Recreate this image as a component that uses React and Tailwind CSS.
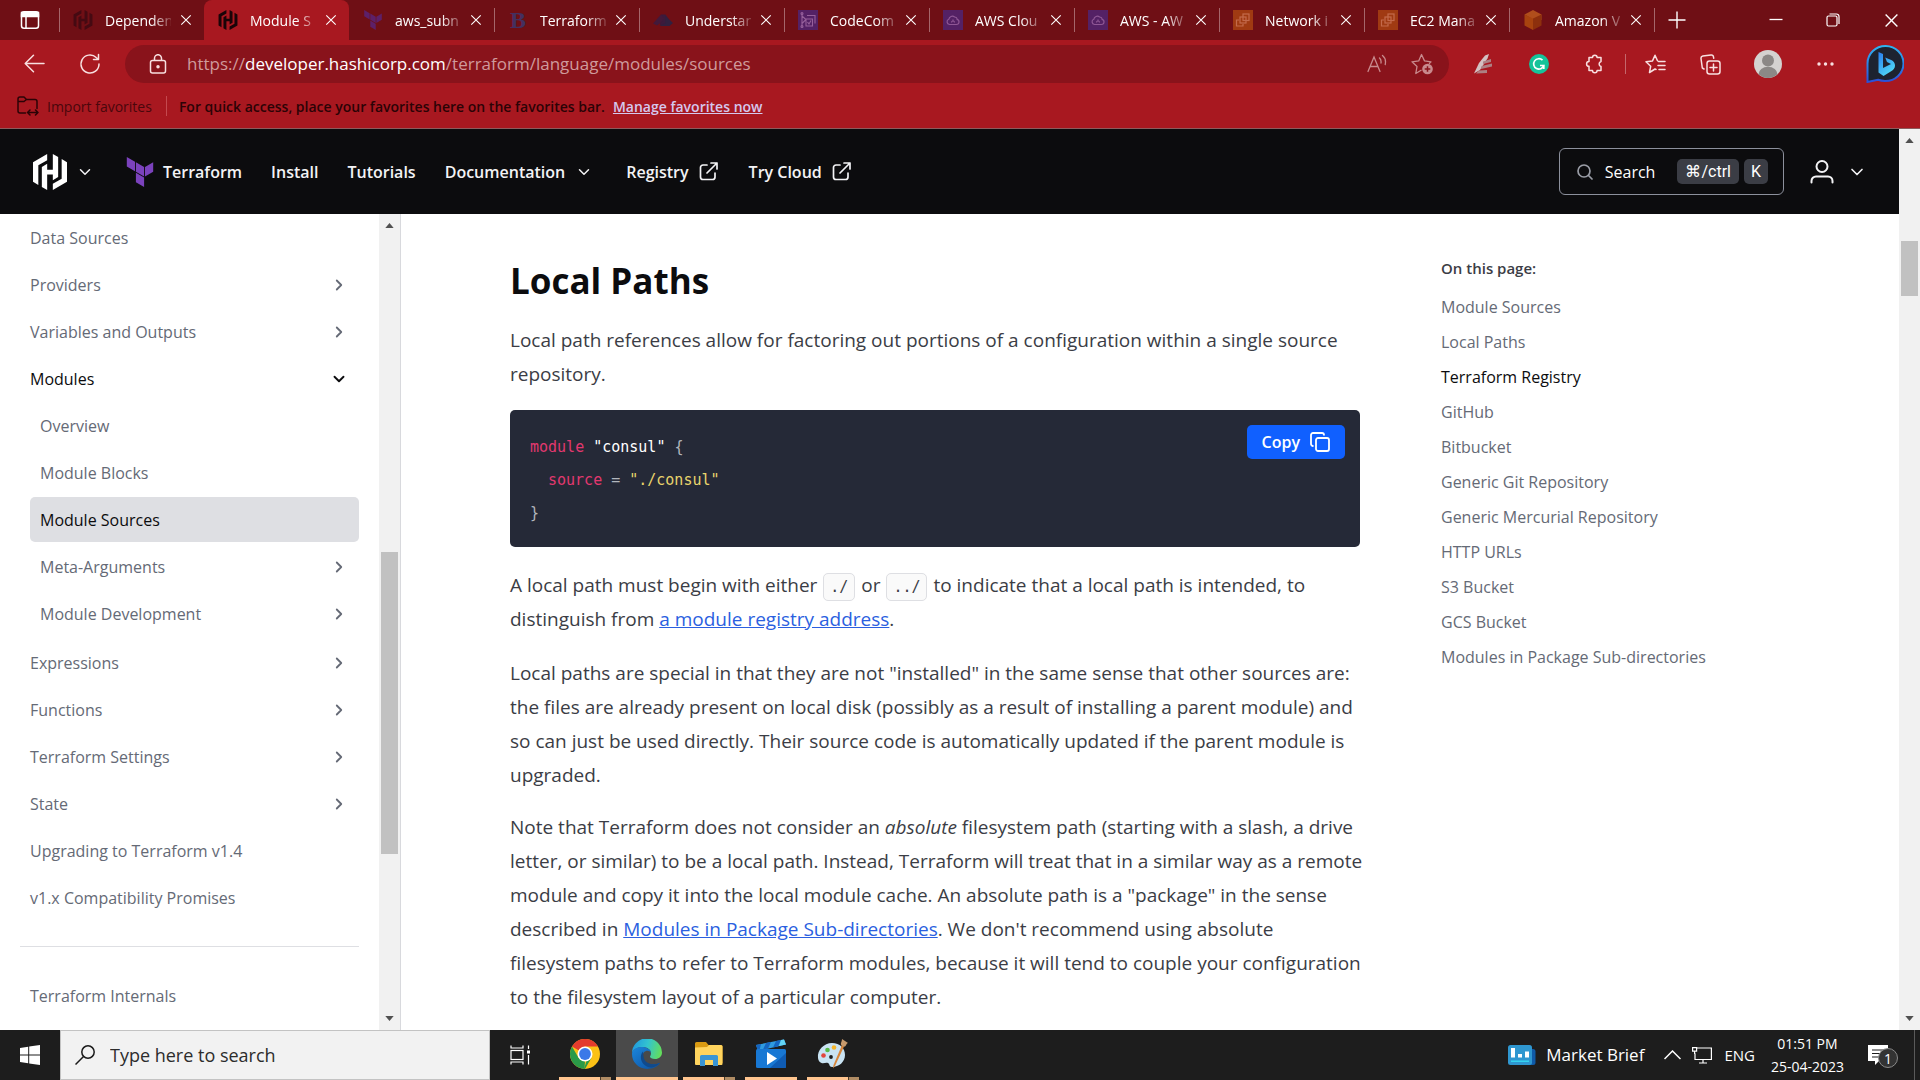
import React from "react";
import { SiHashicorp } from "react-icons/si";
import { ChevronRight, ChevronDown } from "lucide-react";

const TerraformMark = ({ className }) => (
  <svg viewBox="0 0 24 24" className={className} fill="currentColor" aria-hidden="true">
    <path d="M1.44 0v7.575l6.561 3.79V3.787zm21.12 4.227l-6.561 3.791v7.574l6.56-3.787zM8.72 4.23v7.575l6.561 3.787V8.018zm0 8.405v7.575L15.28 24v-7.578z" />
  </svg>
);

const CloudSquare = () => (
  <svg viewBox="0 0 20 20" className="size-5" fill="none" stroke="#8f5795" strokeWidth="1.2">
    <rect width="20" height="20" fill="#542165" stroke="none" />
    <path d="M6.5 14.5h7a2.6 2.6 0 0 0 .6-5.1A2.4 2.4 0 0 0 11.600 7 3.600 3.600 0 0 0 5.800 9.300a2.700 2.700 0 0 0 .7 5.200z" />
    <path d="M8.500 12.500c0-2 3-2 3 0M10 9.500v1.500" />
  </svg>
);

const CommitSquare = () => (
  <svg viewBox="0 0 20 20" className="size-5" fill="none" stroke="#96609b" strokeWidth="1.1">
    <rect width="20" height="20" fill="#542165" stroke="none" />
    <path d="M4 3.500v13M4 6l4 3.500-4 4M9 5.500h8v8M8 9h6.500v7H8z" />
    <path d="M9.500 12l1.500 2 2-3.500" />
    <circle cx="4" cy="3.500" r="1" />
    <circle cx="4" cy="16.500" r="1" />
  </svg>
);

const Ec2Square = () => (
  <svg viewBox="0 0 20 20" className="size-5" fill="none" stroke="#c46a4b" strokeWidth="1.2">
    <rect width="20" height="20" fill="#a03a12" stroke="none" />
    <rect x="10" y="4" width="6" height="6.500" />
    <rect x="7" y="7" width="6" height="6" />
    <path d="M6 10H3.500v6h6.500v-2" />
  </svg>
);

const Cube = () => (
  <svg viewBox="0 0 20 20" className="size-5">
    <path d="M10 0l8.500 4.500V10L10 9.500 1.500 4.500z" fill="#b04e1c" />
    <path d="M1.500 4.500L10 8.500V20l-8.500-4.500z" fill="#a8430f" />
    <path d="M18.500 4.500L10 8.500V20l8.500-4.500z" fill="#8d300d" />
  </svg>
);

const DimCloud = () => (
  <svg viewBox="0 0 20 20" className="size-5">
    <path d="M8 4.500h4.500L16 9.500 12 15H7z" fill="#3b1b3c" />
    <path d="M8 4.500L0 13.500l4 2 4-3 3-4z" fill="#43193a" />
    <path d="M12.500 6l7.500 7-3.500 3H6l6-2.500z" fill="#31203f" />
  </svg>
);

const tabs = [
  { label: "Dependen", icon: <SiHashicorp className="size-5 text-[#450a12]" /> },
  { label: "Module S", icon: <SiHashicorp className="size-5 text-[#1a0408]" />, active: true },
  { label: "aws_subn", icon: <TerraformMark className="size-5 text-[#5d2068]" /> },
  { label: "Terraform", icon: <span className="flex size-5 items-center justify-center font-[Liberation_Serif,serif] text-2xl font-bold text-[#44305f]">B</span> },
  { label: "Understan", icon: <DimCloud /> },
  { label: "CodeCom", icon: <CommitSquare /> },
  { label: "AWS Clou", icon: <CloudSquare /> },
  { label: "AWS - AW", icon: <CloudSquare /> },
  { label: "Network i", icon: <Ec2Square /> },
  { label: "EC2 Mana", icon: <Ec2Square /> },
  { label: "Amazon V", icon: <Cube /> },
];

const CloseX = ({ className }) => (
  <svg viewBox="0 0 14 14" className={className} fill="none" stroke="currentColor" strokeWidth="1.3">
    <path d="M1.500 1.500l11 11M12.500 1.500l-11 11" />
  </svg>
);

function TabStrip() {
  return (
    <div className="flex h-10 items-center bg-[#6f0f15] text-white">
      <button aria-label="Tab actions" className="flex h-full w-[59px] shrink-0 items-center justify-center">
        <svg viewBox="0 0 20 20" className="size-5" fill="none" stroke="currentColor" strokeWidth="1.500">
          <rect x="1.500" y="1.700" width="17" height="16.600" rx="2.500" />
          <path d="M1.500 2.500h17v4h-17z" fill="currentColor" />
          <path d="M6 6v12" />
        </svg>
      </button>
      {tabs.map((t, i) => (
        <div
          key={i}
          className={
            t.active
              ? "flex h-full max-w-[145px] flex-1 items-center rounded-t-lg bg-[#a81820] pl-[14px] pr-[11px]"
              : "relative flex h-full max-w-[145px] flex-1 items-center pl-[14px] pr-[11px]"
          }
        >
          {!t.active && i !== 2 && <span className="absolute left-0 top-2 h-6 w-px bg-[#a5666a]" />}
          <span className="shrink-0">{t.icon}</span>
          <span className="ml-3 min-w-0 flex-1 whitespace-nowrap text-[14px] [mask-image:linear-gradient(to_right,black_70%,rgba(0,0,0,0.2))]">
            {t.label}
          </span>
          <button aria-label={"Close " + t.label} className="ml-2 shrink-0 p-px">
            <CloseX className="size-3" />
          </button>
        </div>
      ))}
      <div className="flex h-full items-center">
        <span className="h-6 w-px bg-[#a5666a]" />
        <button aria-label="New tab" className="flex h-full w-11 items-center justify-center">
          <svg viewBox="0 0 18 18" className="size-[18px]" stroke="currentColor" strokeWidth="1.400">
            <path d="M9 0.500v17M0.500 9h17" />
          </svg>
        </button>
      </div>
      <div className="ml-auto flex h-full">
        <button aria-label="Minimize" className="flex w-[57px] items-center justify-center">
          <svg viewBox="0 0 14 14" className="size-[14px]" stroke="currentColor" strokeWidth="1.300"><path d="M0.500 6.500h13" /></svg>
        </button>
        <button aria-label="Restore" className="flex w-[58px] items-center justify-center">
          <svg viewBox="0 0 14 14" className="size-[14px]" fill="none" stroke="currentColor" strokeWidth="1.200">
            <rect x="1" y="3" width="10" height="10" rx="1.500" />
            <path d="M3.500 1h7A2.500 2.500 0 0 1 13 3.500V11" />
          </svg>
        </button>
        <button aria-label="Close window" className="flex w-[58px] items-center justify-center">
          <CloseX className="size-[15px]" />
        </button>
      </div>
    </div>
  );
}

function AddressRow() {
  return (
    <div className="flex h-12 items-center text-[#f8dfe0]">
      <button aria-label="Back" className="ml-6 shrink-0">
        <svg viewBox="0 0 21 20" className="h-5 w-[21px]" fill="none" stroke="currentColor" strokeWidth="1.500" strokeLinecap="round" strokeLinejoin="round">
          <path d="M20 9.500H1.500M9.500 1.200l-8.300 8.300 8.300 8.300" />
        </svg>
      </button>
      <button aria-label="Refresh" className="ml-[34px] shrink-0">
        <svg viewBox="0 0 22 22" className="size-[22px]" fill="none" stroke="currentColor" strokeWidth="1.500" strokeLinecap="round" strokeLinejoin="round">
          <path d="M20 11a9 9 0 1 1-2.800-6.500L19.500 6.500M19.500 1.500v5h-5" />
        </svg>
      </button>
      <div className="ml-6 flex h-[38px] min-w-0 flex-1 items-center rounded-full bg-[#89131b] pl-6 pr-4">
        <svg viewBox="0 0 18 20" className="h-5 w-[18px] shrink-0" fill="none" stroke="currentColor" strokeWidth="1.500">
          <rect x="1.500" y="6.500" width="15" height="12.500" rx="2" />
          <path d="M5.500 6.500V4.200a3.500 3.500 0 0 1 7 0v2.300" />
          <circle cx="9" cy="12.700" r="1" fill="currentColor" />
        </svg>
        <p aria-label="Address" className="ml-5 flex-1 truncate text-[17px] text-[#cf9a9c]">
          https://<span className="text-white">developer.hashicorp.com</span>/terraform/language/modules/sources
        </p>
        <button aria-label="Read aloud" className="shrink-0 text-[#c88a8d]">
          <svg viewBox="0 0 20 20" className="size-5" fill="none" stroke="currentColor" strokeWidth="1.300" strokeLinecap="round">
            <path d="M1 17.500L7 3l6 14.500M3 12.500h8M12.500 4c1.500 1.300 1.800 3 1.500 5M15.500 1.500c3 2.500 3.500 5.500 2.700 9" />
          </svg>
        </button>
        <button aria-label="Add to favorites" className="ml-6 shrink-0 text-[#c88a8d]">
          <svg viewBox="0 0 22 22" className="size-[22px]" fill="none" stroke="currentColor" strokeWidth="1.300" strokeLinejoin="round">
            <path d="M10.500 17l-5.700 3.500L6 13.500 1 8.800l6.700-.9L10.500 1.500l3 6.400 6.500.9-2 2" />
            <circle cx="16.500" cy="16" r="5.300" fill="#c88a8d" stroke="none" />
            <path d="M16.500 13.200v5.600M13.700 16h5.600" stroke="#89131b" strokeWidth="1.500" />
          </svg>
        </button>
      </div>
      <div className="ml-[25px] flex shrink-0 items-center">
        <button aria-label="Editor extension">
          <svg viewBox="0 0 20 20" className="size-5">
            <path d="M0 19.500L5 9 11 1.500 15 0l-1.500 4.500L6 16z" fill="#d3c1c2" />
            <path d="M9 7.500l8-2.500v3l-8 2M7.500 12l10.500-2.500v3l-11 2.500M5 16.500l8-.5v3l-11 .5z" fill="#ad8083" />
          </svg>
        </button>
        <button aria-label="Grammarly" className="ml-[35px]">
          <svg viewBox="0 0 20 20" className="size-5" fill="none" stroke="#fff" strokeWidth="1.700">
            <circle cx="10" cy="10" r="10" fill="#15c39a" stroke="none" />
            <path d="M13.500 6.200A5.200 5.200 0 1 0 14.800 11.500H11M14.800 11v4" />
          </svg>
        </button>
        <button aria-label="Extensions" className="ml-[36px]">
          <svg viewBox="0 0 20 20" className="size-5" fill="none" stroke="currentColor" strokeWidth="1.500" strokeLinejoin="round">
            <path d="M4 3.500h3.500a2.300 2.300 0 0 1 4.600 0H16v4a2.600 2.600 0 0 0 0 5v4h-3.900a2.300 2.300 0 0 1-4.600 0H4v-4.200a2.400 2.400 0 0 1 0-4.800z" />
          </svg>
        </button>
        <span className="ml-5 h-5 w-px bg-[#c4676c]" />
        <button aria-label="Favorites" className="ml-[19px]">
          <svg viewBox="0 0 21 20" className="h-5 w-[21px]" fill="none" stroke="currentColor" strokeWidth="1.500" strokeLinejoin="round" strokeLinecap="round">
            <path d="M11 15.500L10 15l-5.500 3.500 1.200-6.300L1 7.800l6.500-.9L10 1.200l2.500 5.500M13.500 7.500H20M13 11.500h7M14 15.500h6" />
          </svg>
        </button>
        <button aria-label="Collections" className="ml-[34px]">
          <svg viewBox="0 0 21 21" className="size-[21px]" fill="none" stroke="currentColor" strokeWidth="1.500" strokeLinejoin="round" strokeLinecap="round">
            <rect x="7" y="7" width="13" height="13" rx="2.500" />
            <path d="M13.500 10v7M10 13.500h7M4 15l-1.700-1L1 4.500A2.300 2.300 0 0 1 2.800 2L11 1a2.300 2.300 0 0 1 2.500 2l.2 1.200" />
          </svg>
        </button>
        <button aria-label="Profile" className="ml-[33px]">
          <svg viewBox="0 0 28 28" className="size-7">
            <circle cx="14" cy="14" r="14" fill="#d4d2d0" />
            <circle cx="14" cy="10.500" r="6" fill="#8b8886" />
            <path d="M4.500 24.300a9.500 7.500 0 0 1 19 0A14 14 0 0 1 14 28a14 14 0 0 1-9.500-3.700z" fill="#8b8886" />
          </svg>
        </button>
        <button aria-label="Settings and more" className="ml-[35px]">
          <svg viewBox="0 0 17 4" className="h-1 w-[17px]" fill="currentColor">
            <circle cx="2" cy="2" r="1.700" /><circle cx="8.500" cy="2" r="1.700" /><circle cx="15" cy="2" r="1.700" />
          </svg>
        </button>
        <button aria-label="Bing" className="ml-8 mr-4">
          <svg viewBox="0 0 38 38" className="size-[38px]">
            <defs>
              <linearGradient id="bingRing" x1="0" y1="0" x2="0" y2="1">
                <stop offset="0" stopColor="#2fb4f0" /><stop offset="1" stopColor="#2b4fd8" />
              </linearGradient>
              <linearGradient id="bingB" x1="0" y1="0" x2="0.600" y2="1">
                <stop offset="0" stopColor="#2a7df0" /><stop offset="1" stopColor="#4fd8f5" />
              </linearGradient>
            </defs>
            <path d="M1.500 37V18.500A18 17.500 0 1 1 19 36c-3 0-5-.5-7-1.200z" fill="#1d2330" stroke="url(#bingRing)" strokeWidth="2" />
            <path d="M12.500 7l4.500 2v14l8-4-4-2-1.800-4.500 6 2.400c2.800 1.200 3.800 3.300 3.800 5.600s-1.200 4.200-3.500 5.500L17.500 31l-5-3.500z" fill="url(#bingB)" />
          </svg>
        </button>
      </div>
    </div>
  );
}

function FavoritesBar() {
  return (
    <div className="flex h-[41px] items-center border-b border-[#8d5a5c] pb-1 pl-[17px] text-[14px] text-[#2b0306]">
      <button className="flex items-center text-[#4a070c]">
        <svg viewBox="0 0 22 20" className="h-5 w-[22px]" fill="none" stroke="#2b0306" strokeWidth="1.500" strokeLinejoin="round" strokeLinecap="round">
          <path d="M8.500 17H3a2 2 0 0 1-2-2V3a2 2 0 0 1 2-2h4l2.500 2.500H18a2 2 0 0 1 2 2v7M1 5.500h6L9.500 3.500" />
          <path d="M10.500 16.500H21M13 14l-2.500 2.500L13 19M18.500 14l2.500 2.500-2.500 2.500" />
        </svg>
        <span className="ml-2">Import favorites</span>
      </button>
      <span className="ml-[14px] h-5 w-px bg-[#c4494f]" />
      <span className="ml-3 font-semibold">For quick access, place your favorites here on the favorites bar.</span>
      <a href="#favorites" className="ml-2 font-semibold text-[#d5c8ee] underline">Manage favorites now</a>
    </div>
  );
}

const External = () => (
  <svg viewBox="0 0 19 19" className="size-[19px]" fill="none" stroke="currentColor" strokeWidth="1.700" strokeLinecap="round" strokeLinejoin="round">
    <path d="M8 3H4A2.500 2.500 0 0 0 1.500 5.500V15A2.500 2.500 0 0 0 4 17.500h9.500A2.500 2.500 0 0 0 16 15v-4M12 1h6v6M18 1L8 11" />
  </svg>
);

function SiteHeader() {
  return (
    <header className="flex h-[85px] shrink-0 items-center bg-[#0c0c0e] pl-8 text-[16px] font-semibold text-[#f3f3f5]">
      <button aria-label="HashiCorp products" className="flex items-center">
        <SiHashicorp className="size-9 text-white" />
        <ChevronDown className="ml-2 size-[18px]" strokeWidth={2} />
      </button>
      <nav className="flex items-center whitespace-nowrap">
        <a href="#terraform" className="ml-[31px] flex items-center gap-2">
          <TerraformMark className="size-[30px] text-[#7b42bc]" />
          Terraform
        </a>
        <a href="#install" className="ml-[29px]">Install</a>
        <a href="#tutorials" className="ml-[29px]">Tutorials</a>
        <button className="ml-[29px] flex items-center gap-[10px] font-semibold">
          Documentation
          <ChevronDown className="size-[18px]" strokeWidth={2} />
        </button>
        <a href="#registry" className="ml-[33px] flex items-center gap-[10px]">Registry <External /></a>
        <a href="#cloud" className="ml-[31px] flex items-center gap-[10px]">Try Cloud <External /></a>
      </nav>
      <button className="ml-auto flex h-[47px] items-center rounded-md border border-[#8c909c] pl-[17px] pr-[15px] font-normal text-white">
        <svg viewBox="0 0 16 16" className="size-4" fill="none" stroke="#9a9da6" strokeWidth="1.700" strokeLinecap="round">
          <circle cx="7" cy="7" r="6" /><path d="M11.500 11.500L15 15" />
        </svg>
        <span className="ml-3 text-[16px]">Search</span>
        <kbd className="ml-[22px] flex h-[25px] items-center rounded-[5px] bg-[#3b3d45] px-2 font-[Roboto,sans-serif] text-[16px]">⌘/ctrl</kbd>
        <kbd className="ml-[5px] flex h-[25px] items-center rounded-[5px] bg-[#3b3d45] px-[7px] font-[Roboto,sans-serif] text-[16px]">K</kbd>
      </button>
      <button aria-label="Account" className="ml-[26px] mr-8 flex items-center">
        <svg viewBox="0 0 24 24" className="size-6" fill="none" stroke="currentColor" strokeWidth="2" strokeLinecap="round">
          <circle cx="12" cy="6.500" r="5.500" />
          <path d="M1.500 22.500V21a4.500 4.500 0 0 1 4.500-4.500h12A4.500 4.500 0 0 1 22.500 21v1.500" />
        </svg>
        <ChevronDown className="ml-[13px] size-5" strokeWidth={2} />
      </button>
    </header>
  );
}

const itemsTop = [["Data Sources"], ["Providers", 1], ["Variables and Outputs", 1]];
const itemsNested = [["Overview"], ["Module Blocks"], ["Module Sources", 0, 1], ["Meta-Arguments", 1], ["Module Development", 1]];
const itemsBottom = [["Expressions", 1], ["Functions", 1], ["Terraform Settings", 1], ["State", 1], ["Upgrading to Terraform v1.4"], ["v1.x Compatibility Promises"]];

function Item({ label, more, selected, nested }) {
  return (
    <a
      href="#item"
      className={
        (selected ? "bg-[#dedfe3] text-[#0c0c0e] " : "text-[#656a76] ") +
        (nested ? "pl-[10px] " : "") +
        "flex h-[45px] items-center justify-between rounded-[5px] pr-[11px]"
      }
    >
      {label}
      {more ? <ChevronRight className="size-[18px]" strokeWidth={2.4} /> : null}
    </a>
  );
}

function ScrollArrow({ down }) {
  return (
    <svg viewBox="0 0 10 6" className="mx-auto h-[5px] w-[9px] shrink-0" fill="#505050">
      <path d={down ? "M0 0h10L5 6z" : "M0 6h10L5 0z"} />
    </svg>
  );
}

function Sidebar() {
  return (
    <aside className="flex w-[401px] shrink-0 border-r border-[#d8d9dd] text-[16px]">
      <div className="flex-1 overflow-hidden pl-[30px] pr-5 pt-px">
        <nav className="flex flex-col gap-[2px]">
          {itemsTop.map(([l, m]) => <Item key={l} label={l} more={m} />)}
          <button className="flex h-[45px] items-center justify-between pr-[11px] text-[#0c0c0e]">
            Modules
            <ChevronDown className="size-[18px]" strokeWidth={2.5} />
          </button>
          {itemsNested.map(([l, m, s]) => <Item key={l} label={l} more={m} selected={s} nested />)}
          <div />
          {itemsBottom.map(([l, m]) => <Item key={l} label={l} more={m} />)}
        </nav>
        <hr className="-ml-[10px] mb-[26px] mt-[26px] border-[#dedfe3]" />
        <Item label="Terraform Internals" />
      </div>
      <div className="flex w-[21px] shrink-0 flex-col bg-[#f1f1f1] pb-[9px] pt-[9px]">
        <ScrollArrow />
        <div className="flex-[324]" />
        <div className="mx-[2px] flex-[302] bg-[#c1c1c1]" />
        <div className="flex-[162]" />
        <ScrollArrow down />
      </div>
    </aside>
  );
}

const Kbd = ({ children }) => (
  <code className="mx-px rounded-[5px] border border-[#dedfe3] bg-[#fafafa] px-[6px] py-1 font-['DejaVu_Sans_Mono',monospace] text-[15px] leading-5">{children}</code>
);

const toc = ["Module Sources", "Local Paths", "Terraform Registry", "GitHub", "Bitbucket", "Generic Git Repository", "Generic Mercurial Repository", "HTTP URLs", "S3 Bucket", "GCS Bucket", "Modules in Package Sub-directories"];

function Article() {
  return (
    <article className="max-w-[850px] flex-1 pt-[45px] text-[19px] leading-[34px] text-[#3b3d45]">
      <h1 className="text-[35px] font-bold leading-[44px] text-[#0c0c0e]">Local Paths</h1>
      <p className="mt-5">
        Local path references allow for factoring out portions of a configuration within a single source repository.
      </p>
      <div className="relative mt-[19px] rounded-[5px] bg-[#252937] px-5 pb-[17px] pt-[21px]">
        <code className="flex flex-col whitespace-pre font-['DejaVu_Sans_Mono',monospace] text-[15px] leading-[33px] text-[#b2b6bd]">
          <span className="flex gap-[9px]">
            <span className="text-[#e2386f]">module</span>
            <span className="text-white">"consul"</span>
            <span>{"{"}</span>
          </span>
          <span className="flex gap-[9px] pl-[18px]">
            <span className="text-[#e2386f]">source</span>
            <span>=</span>
            <span className="text-[#e8d46c]">"./consul"</span>
          </span>
          <span>{"}"}</span>
        </code>
        <button className="absolute right-[15px] top-[15px] flex h-[34px] items-center gap-[10px] rounded-[5px] bg-[#1060ff] px-[15px] text-[16px] font-semibold text-white">
          Copy
          <svg viewBox="0 0 20 20" className="size-5" fill="none" stroke="currentColor" strokeWidth="1.800" strokeLinejoin="round">
            <rect x="6" y="6" width="13" height="13" rx="2" />
            <path d="M3.500 14H3a2 2 0 0 1-2-2V3a2 2 0 0 1 2-2h9a2 2 0 0 1 2 2v.5" />
          </svg>
        </button>
      </div>
      <p className="mt-[21px]">
        A local path must begin with either <Kbd>./</Kbd> or <Kbd>../</Kbd> to indicate that a local path is intended, to
        distinguish from <a href="#registry" className="text-[#2b5fe0] underline">a module registry address</a>.
      </p>
      <p className="mt-5">
        Local paths are special in that they are not "installed" in the same sense that other sources are: the files are
        already present on local disk (possibly as a result of installing a parent module) and so can just be used
        directly. Their source code is automatically updated if the parent module is upgraded.
      </p>
      <p className="-mr-5 mt-[18px]">
        Note that Terraform does not consider an <em>absolute</em> filesystem path (starting with a slash, a drive
        <br />
        letter, or similar) to be a local path. Instead, Terraform will treat that in a similar way as a remote
        <br />
        module and copy it into the local module cache. An absolute path is a "package" in the sense
        <br />
        described in <a href="#subdirs" className="text-[#2b5fe0] underline">Modules in Package Sub-directories</a>. We
        don't recommend using absolute
        <br />
        filesystem paths to refer to Terraform modules, because it will tend to couple your configuration
        <br />
        to the filesystem layout of a particular computer.
      </p>
    </article>
  );
}

function Toc() {
  return (
    <nav className="ml-[81px] mr-[58px] w-[400px] shrink-0 pt-[42px] text-[16px] text-[#656a76]">
      <p className="text-[15px] font-semibold leading-6 text-[#3b3d45]">On this page:</p>
      <ul className="mt-[9px]">
        {toc.map((t) => (
          <li key={t} className="flex h-[35px] items-center">
            <a href="#section" className={t === "Terraform Registry" ? "text-[#0c0c0e]" : ""}>{t}</a>
          </li>
        ))}
      </ul>
    </nav>
  );
}

const Chrome = () => (
  <svg viewBox="0 0 30 30" className="size-[30px]">
    <circle cx="15" cy="15" r="15" fill="#fbc116" />
    <path d="M2 7.500A15 15 0 0 1 28 7.500H15L8.500 11.200z" fill="#e33b2e" />
    <path d="M2 7.500L8.500 18.700 15 22.500l-.5 7.500A15 15 0 0 1 2 7.500z" fill="#2a9a48" />
    <path d="M21.500 18.700L15 30h-1l2.500-8z" fill="#2a9a48" />
    <circle cx="15" cy="15" r="7.500" fill="#fff" />
    <circle cx="15" cy="15" r="5.900" fill="#3b79e8" />
  </svg>
);

const Edge = () => (
  <svg viewBox="0 0 30 30" className="size-[30px]">
    <defs>
      <linearGradient id="edgeTop" x1="0" y1="0.300" x2="1" y2="0.500">
        <stop offset="0" stopColor="#1f97e0" /><stop offset="0.500" stopColor="#33c4cf" /><stop offset="1" stopColor="#63dd5c" />
      </linearGradient>
      <linearGradient id="edgeLow" x1="0" y1="0" x2="1" y2="1">
        <stop offset="0" stopColor="#1b86dc" /><stop offset="1" stopColor="#0c4f9e" />
      </linearGradient>
    </defs>
    <path d="M0 15A15 15 0 0 1 30 13.500c0 4-3 6.500-7 6.500-3 0-5-1-5-2.200 0-1 1-1.300 1-3.800 0-3-3.500-6-8.500-6C5 8 0 11 0 15z" fill="url(#edgeTop)" />
    <path d="M0 15c0-4 4-7 9.500-7 5 0 9.500 2.500 9.500 6-1-2-3-2.500-5-2-3 1-4 4-3 7.500 1.500 5 7 7 13 5.500 2-.5 3.500-1 4-.7C25 28 20 30 15 30A15 15 0 0 1 0 15z" fill="url(#edgeLow)" />
    <path d="M11 12.500c-3 3-3 9 1 13 2.500 2.500 6 3.500 9 2.800 3-1 5.500-2.500 7-4.500-6 3-13 1.500-15.500-3-1.500-3-1-6-1.500-8.300z" fill="#114a8b" />
  </svg>
);

const Folder = () => (
  <svg viewBox="0 0 30 26" className="h-[26px] w-[30px]">
    <path d="M1 2.500A1.500 1.500 0 0 1 2.500 1H12l2.500 3H27a1.500 1.500 0 0 1 1.500 1.500V22H1z" fill="#d99a12" />
    <path d="M1 6.500L13 6l2-2h12a1.500 1.500 0 0 1 1.500 1.500V23a1 1 0 0 1-1 1H2a1 1 0 0 1-1-1z" fill="#ffd45e" />
    <path d="M6 25v-9.500A1.500 1.500 0 0 1 7.500 14h15a1.500 1.500 0 0 1 1.500 1.500V25h-5v-6h-8v6z" fill="#3a95d4" />
  </svg>
);

const Movies = () => (
  <svg viewBox="0 0 30 30" className="size-[30px]">
    <path d="M0 6l28-5.500 2 5L2 12z" fill="#2f9be0" />
    <path d="M0 6l5-1-1.500 6.500L2 12zM10 4l5-1-3 6.500-5 1zM20 2l5-1-3 6.500-5 1z" fill="#1565c0" />
    <path d="M25 1l3-.5 2 5-7 1.500z" fill="#62d4f5" />
    <rect y="10" width="30" height="19" rx="1.500" fill="#1878d4" />
    <path d="M14 29L30 14v13.500a1.500 1.500 0 0 1-1.500 1.500z" fill="#0f5cb4" />
    <path d="M11 13l10 6.500L11 26z" fill="#fff" />
  </svg>
);

const Paint = () => (
  <svg viewBox="0 0 32 30" className="h-[30px] w-8">
    <path d="M1 19C0 11 7 4 15 4s13 5 13 12-6 12-13 12c-3 0-2-3-4-4-2.500-1-4 1-6.500 0C2.500 23.300 1.300 21.500 1 19z" fill="#c9e3f3" />
    <circle cx="6.500" cy="16.500" r="2.300" fill="#e2453c" />
    <circle cx="10.500" cy="11" r="2.300" fill="#58b947" />
    <circle cx="17" cy="8.500" r="2.300" fill="#f5b52c" />
    <circle cx="14" cy="18" r="1.900" fill="#1e1e1e" />
    <path d="M25 6l2 1.500L18 27l-2 2.500.5-3.500z" fill="#d8863b" />
    <path d="M24.500 6.500C23 4 25 3 25 0l6 4c-2 .5-1.500 3.500-4 3.800z" fill="#c79a6c" />
  </svg>
);

const apps = [
  { name: "Chrome", icon: <Chrome />, split: true },
  { name: "Edge", icon: <Edge />, active: true },
  { name: "File Explorer", icon: <Folder />, split: true },
  { name: "Movies", icon: <Movies /> },
  { name: "Paint", icon: <Paint />, split: true },
];

function Taskbar() {
  return (
    <footer className="flex h-[50px] shrink-0 items-center bg-[#1d1d1d] text-white">
      <button aria-label="Start" className="flex h-full w-[60px] items-center justify-center">
        <svg viewBox="0 0 20 20" className="size-5" fill="#fff">
          <path d="M0 2.900L8.200 1.700v7.800H0zM9.200 1.600L20 0v9.500H9.200zM0 10.500h8.200v7.800L0 17.100zM9.200 10.500H20V20L9.200 18.400z" />
        </svg>
      </button>
      <label className="flex h-full w-[430px] items-center border border-[#c3c3c3] bg-[#f2f2f2] pl-[14px] text-[#1a1a1a]">
        <svg viewBox="0 0 20 20" className="size-5 shrink-0" fill="none" stroke="currentColor" strokeWidth="1.500">
          <circle cx="13" cy="7" r="6.200" /><path d="M8.500 11.500L0.500 19.500" />
        </svg>
        <input aria-label="Search" placeholder="Type here to search" className="ml-[15px] w-full bg-transparent text-[18px] outline-none placeholder:text-[#2c2c2c]" />
      </label>
      <button aria-label="Task view" className="flex h-full w-[59px] items-center justify-center">
        <svg viewBox="0 0 20 20" className="size-5" fill="none" stroke="#fff" strokeWidth="1.200">
          <rect x="1" y="5.500" width="12" height="9" />
          <path d="M1 0.500V3h12V0.500M1 19.500V17h12v2.500M18.500 0.500V4M18.500 10v9.500" />
          <rect x="17" y="5.500" width="3" height="3" fill="#fff" stroke="none" />
        </svg>
      </button>
      <div className="ml-[5px] flex h-full">
        {apps.map((a) => (
          <button key={a.name} aria-label={a.name} className={a.active ? "flex h-full w-[62px] flex-col bg-[#4a4a4a]" : "flex h-full w-[62px] flex-col px-[5px]"}>
            <span className="flex flex-1 items-center justify-center pt-px">{a.icon}</span>
            <span className="flex h-[3px] w-full bg-[#ffc58f]">
              {a.split && <span className="ml-auto w-[11px] border-l border-[#4a3a2a] bg-[#b08c64]" />}
            </span>
          </button>
        ))}
      </div>
      <div className="ml-auto flex h-full items-center">
        <button className="flex items-center text-[17px]">
          <svg viewBox="0 0 28 20" className="h-5 w-7">
            <path d="M20 4h5a2.500 2.500 0 0 1 2.500 2.500v11A2.500 2.500 0 0 1 25 20h-5z" fill="#0f5aa8" />
            <rect width="24" height="20" rx="2.500" fill="#2f97d0" />
            <path d="M3 3h4v9.500H3zM10 9h4v3.500h-4zM17 6.500h4v6h-4z" fill="#fff" />
            <path d="M3 15.500h18v1.500H3z" fill="#35d4f0" />
          </svg>
          <span className="ml-[10px]">Market Brief</span>
        </button>
        <button aria-label="Show hidden icons" className="ml-5">
          <svg viewBox="0 0 17 10" className="h-[10px] w-[17px]" fill="none" stroke="#fff" strokeWidth="1.500"><path d="M0.500 9l8-8 8 8" /></svg>
        </button>
        <button aria-label="Network" className="ml-[11px]">
          <svg viewBox="0 0 20 17" className="h-[17px] w-5" fill="none" stroke="#fff" strokeWidth="1.200">
            <path d="M5 1h14.400v11.500H3V6.500M11 12.500V16M7 16h8" />
            <path d="M0.600 0.600h4v3.500h-4zM2.600 4v3" />
          </svg>
        </button>
        <span className="ml-3 text-[15px]">ENG</span>
        <div className="ml-4 text-center text-[14px] leading-[23px]">
          <div>01:51 PM</div>
          <div>25-04-2023</div>
        </div>
        <button aria-label="Notifications" className="relative ml-6 mr-4 h-[34px] w-[30px]">
          <svg viewBox="0 0 20 20" className="size-5" fill="#fff">
            <path d="M0 0h20v16h-9l-4 4v-4H0z" />
            <path d="M4 5h12M4 8.500h12M4 12h7" stroke="#1d1d1d" strokeWidth="1.200" />
          </svg>
          <span className="absolute bottom-1 right-0 flex size-5 items-center justify-center rounded-full border border-[#8a8a8a] bg-[#333] text-[14px]">1</span>
        </button>
        <span className="mr-[5px] h-full w-px bg-[#5a5a5a]" />
      </div>
    </footer>
  );
}

export default function App() {
  return (
    <div className="flex h-screen flex-col overflow-hidden bg-white font-['Open_Sans',sans-serif]">
      <div className="shrink-0 bg-[#a81820]">
        <TabStrip />
        <AddressRow />
        <FavoritesBar />
      </div>
      <div className="flex min-h-0 flex-1">
        <div className="flex min-w-0 flex-1 flex-col">
          <SiteHeader />
          <div className="flex min-h-0 flex-1 overflow-hidden">
            <Sidebar />
            <main className="flex min-w-0 flex-1 overflow-hidden pl-[109px]">
              <Article />
              <Toc />
            </main>
          </div>
        </div>
        <div className="flex w-[21px] shrink-0 flex-col bg-[#f1f1f1] py-[9px]">
          <ScrollArrow />
          <div className="flex-[98]" />
          <div className="mx-[2px] flex-[55] bg-[#c1c1c1]" />
          <div className="flex-[720]" />
          <ScrollArrow down />
        </div>
      </div>
      <Taskbar />
    </div>
  );
}
